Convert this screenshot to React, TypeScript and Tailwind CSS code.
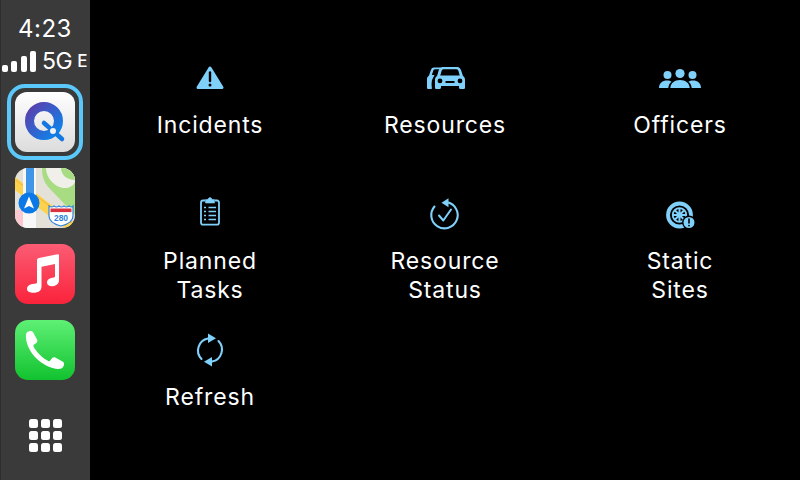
import React from 'react';

const BLUE = '#7fd0fa';

const IncidentsIcon = () => (
  <svg width="48" height="36" viewBox="0 0 48 36">
    <path d="M24 8 L36 27.5 H12 Z" fill={BLUE} stroke={BLUE} strokeWidth="3" strokeLinejoin="round" />
    <path d="M24 12.5 V21" stroke="#000" strokeWidth="2.4" strokeLinecap="round" />
    <circle cx="24" cy="25" r="1.5" fill="#000" />
  </svg>
);

const ResourcesIcon = () => (
  <svg width="48" height="36" viewBox="0 0 48 36">
    {/* back car */}
    <path d="M6 27.5 V19 C6 17.5 7 16.5 8 15.6 L10 9.8 C10.5 8.4 11.5 7.5 13 7.5 H20 V9.2 H14 C13 9.2 12.5 10 12.2 11 L10.8 15 H13.5 L11 20 C10.5 23 10.5 25 10.8 27 V29 H7 C6.4 29 6 28.4 6 27.5 Z" fill={BLUE} />
    {/* front car */}
    <path fillRule="evenodd" d="M17 13 C17.8 9.4 19 7 22 7 H36 C39 7 40 9.4 41 13 L42 16 C43.5 17 44 18.4 44 20 V27.5 C44 28.5 43.4 29 42.6 29 H39.5 C38.6 29 38 28.4 38 27.5 V26 H20 V27.5 C20 28.4 19.4 29 18.5 29 H15.5 C14.6 29 14 28.5 14 27.5 V20 C14 18.4 14.5 17 16 16 Z M19.3 15.5 H38.7 L37.6 11.5 C37.2 10 36.6 9.3 35.4 9.3 H22.6 C21.4 9.3 20.8 10 20.4 11.5 Z M19 18.5 A2.4 2.4 0 1 0 19 23.3 A2.4 2.4 0 1 0 19 18.5 Z M39 18.5 A2.4 2.4 0 1 0 39 23.3 A2.4 2.4 0 1 0 39 18.5 Z M24.5 21 V23 H33.5 V21 Z" fill={BLUE} />
  </svg>
);

const OfficersIcon = () => (
  <svg width="48" height="36" viewBox="0 0 48 36">
    <circle cx="11.5" cy="15" r="4" fill={BLUE} />
    <circle cx="24" cy="13.5" r="4.6" fill={BLUE} />
    <circle cx="36.5" cy="15" r="4" fill={BLUE} />
    <path d="M3 28 C3 23 6.5 20.5 11 20.5 C13 20.5 14.5 21 15.5 21.8 C13.5 23.5 12.5 25.5 12.3 28 Z" fill={BLUE} />
    <path d="M14.3 28 C14.5 23 18.5 20 24 20 C29.5 20 33.5 23 33.7 28 Z" fill={BLUE} />
    <path d="M45 28 C45 23 41.5 20.5 37 20.5 C35 20.5 33.5 21 32.5 21.8 C34.5 23.5 35.5 25.5 35.7 28 Z" fill={BLUE} />
  </svg>
);

const TasksIcon = () => (
  <svg width="48" height="36" viewBox="0 0 48 36" fill="none" stroke={BLUE}>
    <path d="M19 4.5 H17 C15.6 4.5 15 5.3 15 6.5 V26.5 C15 28 15.8 28.7 17 28.7 H31 C32.4 28.7 33 28 33 26.5 V6.5 C33 5.3 32.4 4.5 31 4.5 H29" strokeWidth="1.8" />
    <path d="M19.5 3.5 H22 C22.2 2.4 23 1.6 24 1.6 C25 1.6 25.8 2.4 26 3.5 H28.5 V7 H19.5 Z" fill={BLUE} strokeWidth="0.6" />
    <path d="M22.5 11.5 H30 M22.5 15.5 H30 M22.5 19.5 H30 M22.5 23.5 H30" strokeWidth="1.6" />
    <path d="M18 11.5 H20 M18 15.5 H20 M18 19.5 H20 M18 23.5 H20" strokeWidth="1.6" />
  </svg>
);

const StatusIcon = () => (
  <svg width="48" height="36" viewBox="0 0 48 36" fill="none" stroke={BLUE}>
    <path d="M26.5 6.3 A13.2 13.2 0 1 1 13.5 10.5" strokeWidth="2.1" strokeLinecap="round" />
    <path d="M20.5 6.8 L27.5 2.2 V11.2 Z" fill={BLUE} stroke="none" />
    <path d="M18 19.5 L22.3 24.5 L30 13.5" strokeWidth="2" strokeLinecap="round" strokeLinejoin="round" />
  </svg>
);

const SitesIcon = () => (
  <svg width="48" height="36" viewBox="0 0 48 36" fill="none" stroke={BLUE}>
    <circle cx="23.5" cy="19" r="11.5" strokeWidth="3.8" />
    <circle cx="23.5" cy="19" r="6.8" strokeWidth="1.8" />
    <circle cx="23.5" cy="19" r="2" fill={BLUE} stroke="none" />
    <path d="M23.5 12 V26 M16.5 19 H30.5 M18.5 14 L28.5 24 M28.5 14 L18.5 24" strokeWidth="2" />
    <circle cx="33" cy="26.5" r="6.2" fill={BLUE} stroke="#000" strokeWidth="1.4" />
    <path d="M33 23 V27" stroke="#000" strokeWidth="1.6" strokeLinecap="round" />
    <circle cx="33" cy="29.6" r="0.9" fill="#000" stroke="none" />
  </svg>
);

const RefreshIcon = () => (
  <svg width="48" height="36" viewBox="0 0 48 36" fill="none" stroke={BLUE}>
    <path d="M22 6.5 A12.2 12.2 0 0 0 15.5 27" strokeWidth="2.1" strokeLinecap="round" />
    <path d="M26 29.5 A12.2 12.2 0 0 0 32.5 9" strokeWidth="2.1" strokeLinecap="round" />
    <path d="M22 1.5 L30 6.2 L22 11 Z" fill={BLUE} stroke="none" />
    <path d="M26 25 L18 29.8 L26 34.5 Z" fill={BLUE} stroke="none" />
  </svg>
);

const QuickLogo = () => (
  <svg width="60" height="60" viewBox="0 0 60 60">
    <defs>
      <linearGradient id="qTile" x1="0" y1="0" x2="0" y2="1">
        <stop offset="0" stopColor="#ffffff" />
        <stop offset="1" stopColor="#dcdcdc" />
      </linearGradient>
      <linearGradient id="qRing" x1="0" y1="0" x2="1" y2="1">
        <stop offset="0" stopColor="#5a3eae" />
        <stop offset="1" stopColor="#0c86ec" />
      </linearGradient>
    </defs>
    <rect width="60" height="60" rx="12" fill="url(#qTile)" />
    <circle cx="29" cy="29" r="14.5" fill="none" stroke="url(#qRing)" strokeWidth="9" />
    <path d="M29 31 L47 47" stroke="#1478e2" strokeWidth="4.5" strokeLinecap="round" />
    <circle cx="38" cy="39" r="3" fill="#f2f2f2" />
  </svg>
);

const MapsLogo = () => (
  <svg width="60" height="60" viewBox="0 0 60 60">
    <defs>
      <clipPath id="mapClip"><rect width="60" height="60" rx="13" /></clipPath>
    </defs>
    <g clipPath="url(#mapClip)">
      <rect width="60" height="60" fill="#e4e2d8" />
      <path d="M27 0 H60 V47 L38 24 C31 17 27 12 27 0 Z" fill="#a7dc83" />
      <path d="M31 0 H60 V14 C58 18 54 20 50 20 C40 20 31 10 31 0 Z" fill="#f1efe9" />
      <path d="M46 0 H60 V12 C52 12 46 7 46 0 Z" fill="#a7dc83" />
      <path d="M0 9 L60 55 V60 H50 L0 22 Z" fill="#fbd24e" />
      <path d="M0 11.5 L60 57.5" stroke="#f7a83a" strokeWidth="0.8" />
      <rect x="0" y="42" width="8" height="18" fill="#fbc8d0" />
      <rect x="8" y="0" width="13" height="60" fill="#f7f7f7" />
      <rect x="11" y="0" width="8" height="36" fill="#3f95e8" />
      <circle cx="14" cy="35" r="10.5" fill="#0a78e6" />
      <path d="M14 28.5 L19 40.5 L14 38 L9 40.5 Z" fill="#fff" />
      <path d="M34 38 Q36.5 40 39 38 Q41.5 40 44 38 Q46.5 40 49 38 Q51.5 40 54 38 Q56.5 40 58 38 V48 Q58 55 46 58 Q34 55 34 48 Z" fill="#fff" stroke="#2f83dc" strokeWidth="1.2" />
      <rect x="35.5" y="40.5" width="21" height="3.6" fill="#d8313f" />
      <text x="46" y="52.5" textAnchor="middle" fontSize="8.5" fontFamily="'Liberation Sans', sans-serif" fontWeight="700" fill="#2f83dc">280</text>
    </g>
  </svg>
);

const MusicLogo = () => (
  <svg width="60" height="60" viewBox="0 0 60 60">
    <defs>
      <linearGradient id="musicBg" x1="0" y1="0" x2="0" y2="1">
        <stop offset="0" stopColor="#fb5c74" />
        <stop offset="1" stopColor="#fa233b" />
      </linearGradient>
    </defs>
    <rect width="60" height="60" rx="13" fill="url(#musicBg)" />
    <path transform="translate(0,-4)" d="M22 20.5 C22 19 22.8 18.2 24 18 L42.5 14.2 C43.5 14 44 14.6 44 15.6 V40 C44 43.6 41.8 45.4 38.8 46 C35.6 46.7 32 45.6 32 42.5 C32 39.6 34.5 38.2 37.2 37.7 L39 37.4 C39.7 37.2 40 36.9 40 36 V24 L26.5 26.8 V46.5 C26.5 50.3 24 52 20.8 52.6 C17.5 53.3 12 52.5 12 49 C12 46 14.6 44.6 17.5 44.1 L21 43.4 C21.7 43.2 22 42.9 22 42 Z" fill="#fff" />
  </svg>
);

const PhoneLogo = () => (
  <svg width="60" height="60" viewBox="0 0 60 60">
    <defs>
      <linearGradient id="phoneBg" x1="0" y1="0" x2="0" y2="1">
        <stop offset="0" stopColor="#5ef075" />
        <stop offset="1" stopColor="#12c22f" />
      </linearGradient>
    </defs>
    <rect width="60" height="60" rx="13" fill="url(#phoneBg)" />
    <path d="M11 14.5 C11 12.5 13 11.3 15 11 C16.5 10.8 17.5 11.3 18.2 12.5 L22 19.5 C22.7 20.8 22.4 22 21.3 22.9 L18.8 24.8 C18.3 25.3 18.2 25.8 18.5 26.5 C21 31.5 28 38.5 33.3 41 C34 41.3 34.6 41.2 35 40.7 L37 38.3 C37.9 37.2 39 36.9 40.3 37.6 L47.5 41.5 C48.7 42.2 49.2 43.2 49 44.6 C48.7 46.6 47.5 48.5 45.5 48.8 C37.5 49.8 27.5 44.6 21 38 C14.5 31.5 10.3 22.5 11 14.5 Z" fill="#fff" />
  </svg>
);

const Signal = () => (
  <div className="flex items-end gap-[3.5px]">
    <div className="w-[6px] h-[7px] rounded-[2px] bg-white" />
    <div className="w-[6px] h-[11px] rounded-[2px] bg-white" />
    <div className="w-[6px] h-[16px] rounded-[2px] bg-white" />
    <div className="w-[6px] h-[21px] rounded-[2px] bg-white" />
  </div>
);

const items = [
  { label: ['Incidents'], icon: <IncidentsIcon /> },
  { label: ['Resources'], icon: <ResourcesIcon /> },
  { label: ['Officers'], icon: <OfficersIcon /> },
  { label: ['Planned', 'Tasks'], icon: <TasksIcon /> },
  { label: ['Resource', 'Status'], icon: <StatusIcon /> },
  { label: ['Static', 'Sites'], icon: <SitesIcon /> },
  { label: ['Refresh'], icon: <RefreshIcon /> },
];

export default function App() {
  return (
    <div className="w-[800px] h-[480px] flex bg-black overflow-hidden text-white font-['Inter',sans-serif]">
      {/* Dock */}
      <div className="w-[90px] shrink-0 flex flex-col items-center bg-[#3a3a3a] shadow-[inset_1px_0_0_#2e2e2e]">
        <div className="mt-[15px] text-[24px] leading-[28px] font-normal tracking-[0.5px]">4:23</div>
        <div className="mt-[5px] w-full pl-[1.5px] flex items-end h-[24px]">
          <Signal />
          <span className="ml-[6px] text-[23px] leading-[24px] tracking-[-0.5px] mb-[-1px]">5G</span>
          <span className="ml-[5px] text-[17px] leading-[24px] font-medium mb-[-1px]">E</span>
        </div>
        <div className="mt-[20px] flex flex-col gap-[16px]">
          <div className="relative w-[60px] h-[60px]">
            <QuickLogo />
            <div className="absolute -inset-x-[8px] -inset-y-[8px] rounded-[18px] border-[4px] border-[#5ac8fa]" />
          </div>
          <MapsLogo />
          <MusicLogo />
          <PhoneLogo />
        </div>
        <div className="mt-[39px] grid grid-cols-3 gap-[3px]">
          {Array.from({ length: 9 }).map((_, i) => (
            <div key={i} className="w-[9px] h-[9px] rounded-[2.5px] bg-white" />
          ))}
        </div>
      </div>

      {/* Menu */}
      <div className="flex-1 grid grid-cols-[repeat(3,235px)] auto-rows-[136px] justify-center pt-[60px]">
        {items.map((item) => (
          <div key={item.label[0]} className="flex flex-col items-center">
            <div className="h-[36px] mb-[15px]">{item.icon}</div>
            <div className="text-center text-[23px] leading-[29px] tracking-[0.85px] font-[370]">
              {item.label.map((line) => (
                <div key={line}>{line}</div>
              ))}
            </div>
          </div>
        ))}
      </div>
    </div>
  );
}
